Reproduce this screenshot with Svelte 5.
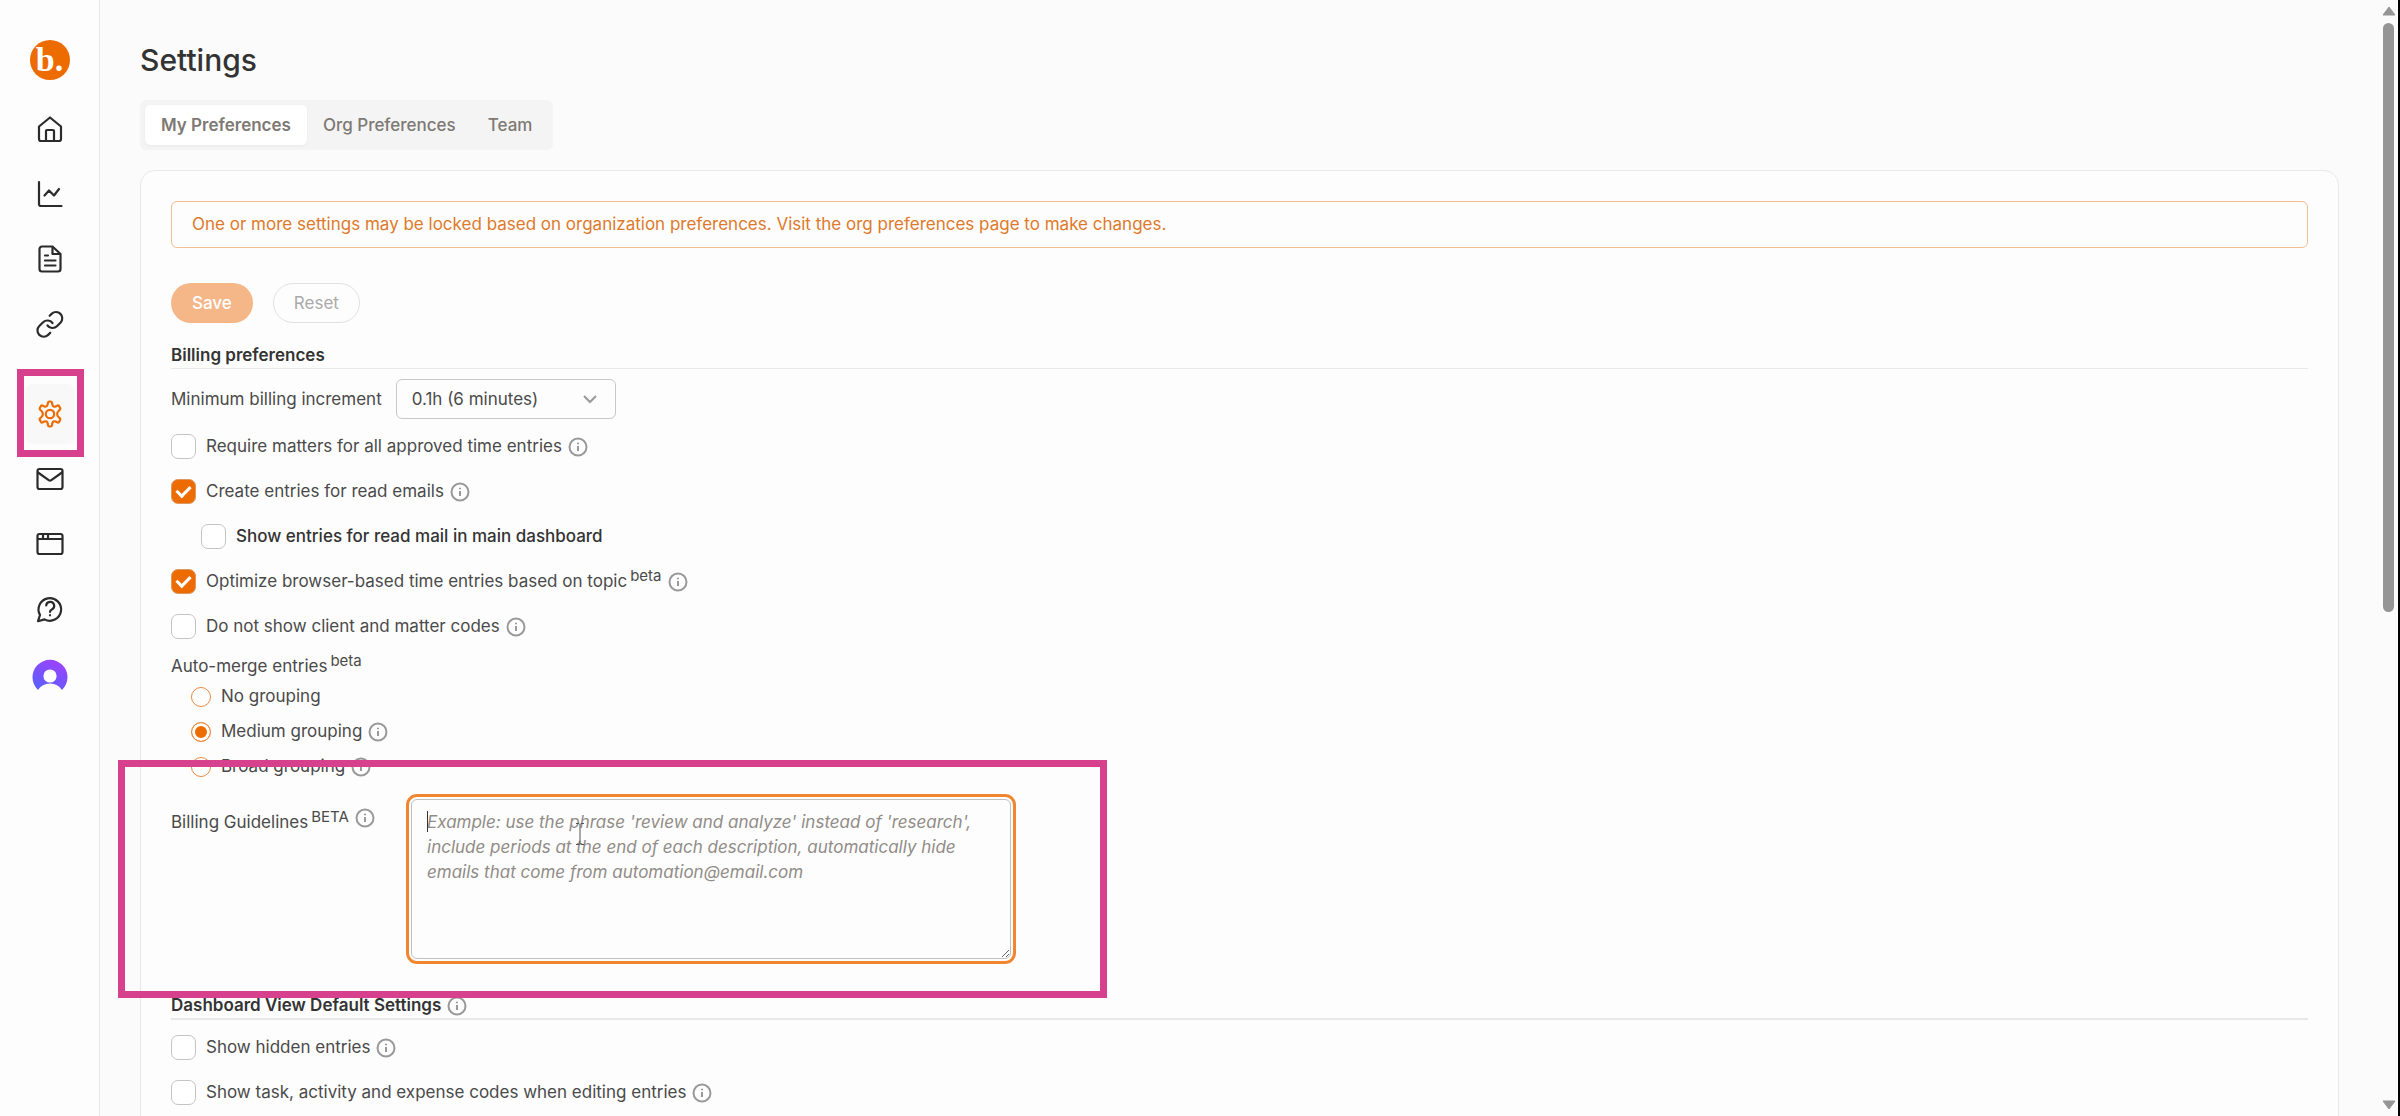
<script>
  const mainNav = ["home", "chart", "document", "link"];
  const secondaryNav = ["settings", "mail", "window", "help"];
  const tabs = ["My Preferences", "Org Preferences", "Team"];

  let activeTab = $state("My Preferences");
  let increment = $state("0.1");
  let grouping = $state("medium");
  let guidelines = $state("");

  let billing = $state([
    { id: "matters", label: "Require matters for all approved time entries", checked: false, info: true },
    { id: "read-emails", label: "Create entries for read emails", checked: true, info: true },
    { id: "read-main", label: "Show entries for read mail in main dashboard", checked: false, nested: true },
    { id: "optimize", label: "Optimize browser-based time entries based on topic", checked: true, beta: true, info: true },
    { id: "codes", label: "Do not show client and matter codes", checked: false, info: true },
  ]);

  let dashboard = $state([
    { id: "hidden", label: "Show hidden entries", checked: false, info: true },
    { id: "expense", label: "Show task, activity and expense codes when editing entries", checked: false, info: true },
  ]);

  const groupings = [
    { value: "none", label: "No grouping" },
    { value: "medium", label: "Medium grouping", info: true },
    { value: "broad", label: "Broad grouping", info: true },
  ];
</script>

{#snippet icon(name)}
  <svg class="icon" viewBox="0 0 30 30" aria-hidden="true">
    {#if name === "home"}
      <path d="M4 12.5 15 3.5l11 9V25a2 2 0 0 1-2 2H6a2 2 0 0 1-2-2Z" />
      <path d="M11 27V17a1 1 0 0 1 1-1h6a1 1 0 0 1 1 1v10" />
    {:else if name === "chart"}
      <path d="M4 3v22a2 2 0 0 0 2 2h20.500" />
      <path d="m9.500 16.500 4.500-5 5 5 5-6.500" />
    {:else if name === "document"}
      <path d="M17.500 2.500H7A2.500 2.500 0 0 0 4.500 5v20A2.500 2.500 0 0 0 7 27.500h16a2.500 2.500 0 0 0 2.500-2.500V10Z" />
      <path d="M17.500 3v7h7.500M10 11.500h3M10 16.500h10.500M10 21.500h10.500" />
    {:else if name === "link"}
      <path d="M12.500 16.500a6.250 6.250 0 0 0 9.400.700l3.750-3.750a6.250 6.250 0 0 0-8.800-8.850l-2.200 2.150" />
      <path d="M17.500 14a6.250 6.250 0 0 0-9.400-.700L4.300 17.050a6.250 6.250 0 0 0 8.850 8.850l2.100-2.150" />
    {:else if name === "settings"}
      <circle cx="15" cy="15" r="4.200" />
      <path d="M12.700 5.200 13 3.700a1.500 1.500 0 0 1 1.500-1.200h1a1.500 1.500 0 0 1 1.500 1.200l.400 2a2.200 2.200 0 0 0 3.200 1.800l1.500-.800a1.500 1.500 0 0 1 2 .500l1 1.700a1.500 1.500 0 0 1-.300 1.900l-1.300 1.200a4 4 0 0 0 0 6l1.300 1.200a1.500 1.500 0 0 1 .300 1.900l-1 1.700a1.500 1.500 0 0 1-2 .500l-1.500-.800a2.200 2.200 0 0 0-3.200 1.800l-.400 2a1.500 1.500 0 0 1-1.500 1.200h-1a1.500 1.500 0 0 1-1.500-1.200l-.400-2a2.200 2.200 0 0 0-3.200-1.800l-1.500.800a1.500 1.500 0 0 1-2-.500l-1-1.700a1.500 1.500 0 0 1 .300-1.900L6.500 18a4 4 0 0 0 0-6l-1.300-1.200a1.500 1.500 0 0 1-.300-1.900l1-1.700a1.500 1.500 0 0 1 2-.500l1.500.800a2.200 2.200 0 0 0 3.100-1.800Z" />
    {:else if name === "mail"}
      <rect x="2.500" y="5" width="25" height="20" rx="2" />
      <path d="m3 8.500 10.700 7.600a2.200 2.200 0 0 0 2.600 0L27 8.500" />
    {:else if name === "window"}
      <rect x="2.500" y="5" width="25" height="20" rx="2" />
      <path d="M3 10h24M8 5.500V9M13 5.500V9" />
    {:else if name === "help"}
      <path d="M3 27.200 5 21A11.300 11.300 0 1 1 9.500 25.400Z" />
      <path d="M11.200 11.500a4 4 0 1 1 5.600 4c-1.200.600-1.800 1.200-1.800 2.500" />
      <path d="M15 21.200v.100" />
    {/if}
  </svg>
{/snippet}

{#snippet info()}
  <svg class="info" viewBox="0 0 20 20" role="img" aria-label="More information">
    <circle cx="10" cy="10" r="8.500" />
    <path d="M10 9v5M10 5.800v1.400" />
  </svg>
{/snippet}

{#snippet checkRow(item)}
  <div class="row" class:nested={item.nested}>
    <input type="checkbox" id={item.id} bind:checked={item.checked} />
    <label for={item.id}>{item.label}{#if item.beta}<sup>beta</sup>{/if}</label>
    {#if item.info}{@render info()}{/if}
  </div>
{/snippet}

<div class="app">
  <aside class="sidebar">
    <a class="logo" href="#home" aria-label="Home">b.</a>
    <nav>
      {#each mainNav as name}
        <a class="nav-item" href={`#${name}`} aria-label={name}>{@render icon(name)}</a>
      {/each}
    </nav>
    <nav class="secondary">
      {#each secondaryNav as name}
        <a class="nav-item" class:active={name === "settings"} href={`#${name}`} aria-label={name}>
          {@render icon(name)}
          {#if name === "settings"}<span class="marker"></span>{/if}
        </a>
      {/each}
    </nav>
    <button class="avatar" aria-label="Account">
      <svg viewBox="0 0 36 36" aria-hidden="true">
        <defs>
          <linearGradient id="avatar-fill" x1="0.800" y1="0" x2="0.300" y2="1">
            <stop offset="0" stop-color="#a040ff" />
            <stop offset="1" stop-color="#5b60ff" />
          </linearGradient>
        </defs>
        <path d="M6 31A17.500 17.500 0 1 1 30 31Q26 24.500 18 24.500T6 31Z" fill="url(#avatar-fill)" />
        <circle cx="18" cy="17" r="6.600" fill="#fff" />
      </svg>
    </button>
  </aside>

  <main>
    <h1>Settings</h1>
    <div class="tabs" role="tablist">
      {#each tabs as tab}
        <button
          class="tab"
          role="tab"
          class:selected={tab === activeTab}
          aria-selected={tab === activeTab}
          onclick={() => (activeTab = tab)}
        >
          {tab}
        </button>
      {/each}
    </div>

    <section class="card">
      <p class="alert">
        One or more settings may be locked based on organization preferences. Visit the org preferences page to make changes.
      </p>

      <div class="actions">
        <button class="button save" disabled>Save</button>
        <button class="button reset" disabled>Reset</button>
      </div>

      <h2>Billing preferences</h2>
      <div class="increment">
        <label for="increment">Minimum billing increment</label>
        <div class="select">
          <select id="increment" bind:value={increment}>
            <option value="0.1">0.1h (6 minutes)</option>
            <option value="0.25">0.25h (15 minutes)</option>
          </select>
          <svg viewBox="0 0 14 14" aria-hidden="true"><path d="m1 4 6 6 6-6" /></svg>
        </div>
      </div>

      {#each billing as item}
        {@render checkRow(item)}
      {/each}

      <div class="group" role="radiogroup" aria-labelledby="merge-label">
        <div class="group-label" id="merge-label">Auto-merge entries<sup>beta</sup></div>
        {#each groupings as option}
          <div class="radio-row">
            <input type="radio" id={`group-${option.value}`} value={option.value} bind:group={grouping} />
            <label for={`group-${option.value}`}>{option.label}</label>
            {#if option.info}{@render info()}{/if}
          </div>
        {/each}
      </div>

      <div class="guidelines">
        <div class="guidelines-label">
          <label for="guidelines">Billing Guidelines<sup>BETA</sup></label>
          {@render info()}
        </div>
        <div class="editor">
          <textarea
            id="guidelines"
            bind:value={guidelines}
            placeholder="Example: use the phrase 'review and analyze' instead of 'research', include periods at the end of each description, automatically hide emails that come from automation@email.com"
          ></textarea>
          <span class="caret"></span>
          <svg class="pointer" viewBox="0 0 10 24" aria-hidden="true">
            <path d="M1 1.500h3l1 1 1-1h3M5 2.500v19M1 22.500h3l1-1 1 1h3" />
          </svg>
        </div>
        <span class="marker"></span>
      </div>

      <h2 class="thick">Dashboard View Default Settings {@render info()}</h2>
      {#each dashboard as item}
        {@render checkRow(item)}
      {/each}
    </section>
  </main>

  <div class="scrollbar" aria-hidden="true">
    <svg viewBox="0 0 14 10"><path d="M7 1 13 9H1Z" /></svg>
    <div class="track"><div class="thumb"></div></div>
    <svg viewBox="0 0 14 10"><path d="M7 9 13 1H1Z" /></svg>
  </div>
</div>

<style>
  :global(body) {
    overflow: hidden;
  }

  .app {
    --orange: #ed6c02;
    --pink: #d6408c;
    --text: #4a4a4a;
    --dark: #333;
    --line: #e8e8e8;
    display: flex;
    height: 100vh;
    overflow: hidden;
    background: #fbfbfb;
    color: var(--text);
    font-family: Inter, "Liberation Sans", sans-serif;
    font-size: 17px;
    line-height: 25px;
  }
  .app :global(*) {
    box-sizing: border-box;
  }
  button,
  select,
  textarea {
    font: inherit;
    color: inherit;
  }

  .sidebar {
    display: flex;
    flex-direction: column;
    align-items: center;
    flex: none;
    width: 100px;
    padding-top: 40px;
    background: #fdfdfd;
    border-right: 1px solid var(--line);
  }
  .logo {
    display: flex;
    align-items: center;
    justify-content: center;
    width: 40px;
    height: 40px;
    margin-bottom: 19px;
    border-radius: 50%;
    background: var(--orange);
    color: #fff;
    font-family: "Liberation Serif", serif;
    font-size: 34px;
    font-weight: 700;
    line-height: 34px;
    text-decoration: none;
  }
  nav {
    display: flex;
    flex-direction: column;
    gap: 5px;
  }
  nav.secondary {
    margin-top: 30px;
  }
  .nav-item {
    position: relative;
    display: flex;
    align-items: center;
    justify-content: center;
    width: 50px;
    height: 60px;
    border-radius: 8px;
    color: #2b2b2b;
  }
  .nav-item.active {
    color: var(--orange);
    background: #f8f8f8;
  }
  .icon {
    width: 30px;
    height: 30px;
    fill: none;
    stroke: currentColor;
    stroke-width: 2.2;
    stroke-linecap: round;
    stroke-linejoin: round;
  }
  .marker {
    position: absolute;
    inset: -15px -9px -13px -8px;
    border: 7px solid var(--pink);
    pointer-events: none;
  }
  .avatar {
    width: 36px;
    height: 36px;
    margin-top: 20px;
    padding: 0;
    border: 0;
    background: none;
  }
  .avatar svg {
    display: block;
  }

  main {
    flex: 1;
    padding: 40px 43px 0 40px;
  }
  h1 {
    margin: 0 0 20px;
    color: var(--dark);
    font-size: 30px;
    font-weight: 500;
    line-height: 40px;
  }
  .tabs {
    display: inline-flex;
    height: 50px;
    margin-bottom: 20px;
    padding: 5px;
    border-radius: 6px;
    background: #f4f4f4;
    vertical-align: top;
  }
  .tab {
    padding: 0 16px;
    border: 0;
    border-radius: 5px;
    background: none;
    color: #7d7974;
    font-weight: 500;
  }
  .tab.selected {
    background: #fff;
    box-shadow: 0 1px 3px rgba(0, 0, 0, 0.05);
    font-weight: 600;
  }

  .card {
    padding: 30px;
    border: 1px solid var(--line);
    border-radius: 15px;
    background: #fdfdfd;
  }
  .alert {
    margin: 0 0 35px;
    padding: 10px 20px;
    border: 1px solid #f2bd90;
    border-radius: 6px;
    color: #dd7a2b;
  }
  .actions {
    display: flex;
    gap: 20px;
    margin-bottom: 18px;
  }
  .button {
    height: 40px;
    padding: 0 20px;
    border: 1px solid transparent;
    border-radius: 20px;
  }
  .save {
    background: #f5b688;
    color: #fff;
    font-weight: 500;
  }
  .reset {
    border-color: #e2e2e2;
    background: none;
    color: #aaa;
  }
  h2 {
    display: flex;
    gap: 6px;
    height: 28px;
    margin: 0;
    border-bottom: 1px solid var(--line);
    color: var(--dark);
    font-size: 17px;
    font-weight: 600;
    line-height: 29px;
  }
  h2.thick {
    height: 29px;
    margin: 32px 0 5px;
    border-bottom-width: 2px;
  }

  .increment {
    display: flex;
    align-items: center;
    gap: 14px;
    margin: 10px 0 5px;
  }
  .select {
    position: relative;
  }
  .select select {
    appearance: none;
    width: 220px;
    height: 40px;
    padding: 0 40px 0 15px;
    border: 1px solid #c8c8c8;
    border-radius: 6px;
    background: #fdfdfd;
  }
  .select svg {
    position: absolute;
    top: 13px;
    right: 19px;
    width: 14px;
    height: 14px;
    fill: none;
    stroke: #999;
    stroke-width: 2;
    pointer-events: none;
  }

  .row {
    display: flex;
    align-items: center;
    height: 45px;
  }
  .row.nested {
    padding-left: 30px;
    color: var(--dark);
    font-weight: 500;
  }
  .row label {
    margin-left: 10px;
  }
  .info {
    flex: none;
    width: 20px;
    height: 20px;
    margin-left: 6px;
    fill: none;
    stroke: #999;
    stroke-width: 2;
  }
  h2 .info {
    margin: 5px 0 0;
  }
  sup {
    margin-left: 3px;
    font-size: 15px;
    line-height: 0;
    vertical-align: 6px;
  }

  input[type="checkbox"],
  input[type="radio"] {
    appearance: none;
    flex: none;
    width: 25px;
    height: 25px;
    margin: 0;
    border: 1px solid #c4c4c4;
    border-radius: 7px;
    background: #fff;
  }
  input[type="checkbox"]:checked {
    display: grid;
    place-items: center;
    border-color: #dc9a62;
    background: var(--orange);
  }
  input[type="checkbox"]:checked::before {
    content: "";
    width: 6px;
    height: 11px;
    margin-top: -4px;
    border: solid #fff;
    border-width: 0 3px 3px 0;
    transform: rotate(45deg);
  }
  input[type="radio"] {
    width: 20px;
    height: 20px;
    border-color: #e88a42;
    border-radius: 50%;
  }
  input[type="radio"]:checked {
    background: var(--orange);
    box-shadow: inset 0 0 0 3px #fff;
  }

  .group-label {
    height: 30px;
    line-height: 34px;
  }
  .radio-row {
    display: flex;
    align-items: center;
    height: 35px;
    padding-left: 20px;
  }
  .radio-row label {
    margin-left: 10px;
  }

  .guidelines {
    position: relative;
    display: flex;
    margin-top: 15px;
  }
  .guidelines .marker {
    inset: -39px auto -39px -53px;
    width: 989px;
  }
  .guidelines-label {
    display: flex;
    align-items: flex-start;
    width: 240px;
    margin-top: 9px;
  }
  .guidelines-label label {
    padding-top: 2px;
  }
  .editor {
    position: relative;
  }
  textarea {
    display: block;
    width: 600px;
    height: 160px;
    padding: 10px 15px;
    border: 1px solid #c0c0c0;
    border-radius: 6px;
    outline: 3px solid #f0862f;
    outline-offset: 2px;
    background: #fdfdfd;
    resize: vertical;
  }
  textarea::placeholder {
    color: #918c87;
    font-style: italic;
    opacity: 1;
  }
  .caret {
    position: absolute;
    top: 12px;
    left: 16px;
    width: 1px;
    height: 21px;
    background: #333;
  }
  .pointer {
    position: absolute;
    top: 23px;
    left: 164px;
    width: 10px;
    height: 24px;
    fill: none;
    stroke: #555;
  }

  .scrollbar {
    display: flex;
    flex-direction: column;
    align-items: center;
    flex: none;
    width: 18px;
    padding: 6px 3px 6px 0;
    border-right: 2px solid #000;
  }
  .scrollbar svg {
    flex: none;
    width: 14px;
    height: 10px;
    fill: #959595;
    stroke: #959595;
    stroke-linejoin: round;
  }
  .track {
    flex: 1;
    margin: 7px 0;
  }
  .thumb {
    width: 11px;
    height: 55%;
    border-radius: 6px;
    background: #959595;
  }
</style>
